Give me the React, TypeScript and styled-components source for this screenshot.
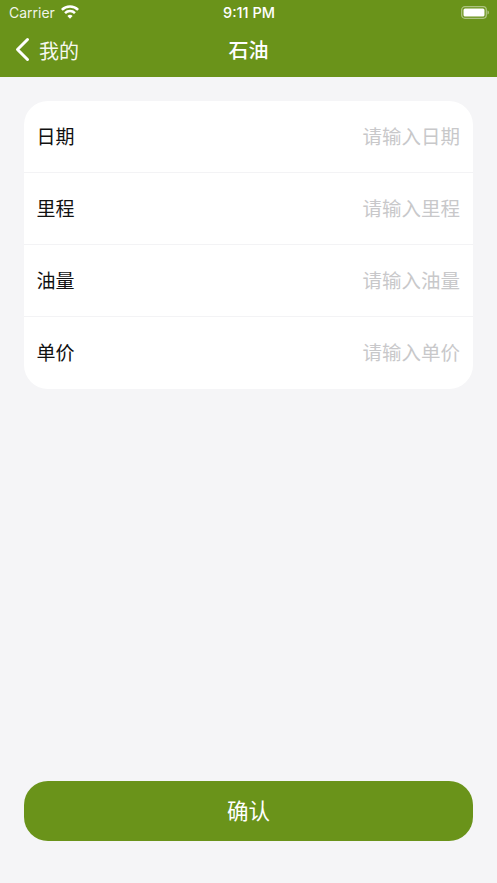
import React from 'react';
import styled, { createGlobalStyle } from 'styled-components';

const cjk = '"Noto Sans CJK SC", "Noto Sans", sans-serif';
const green = '#6a931a';

const GlobalStyle = createGlobalStyle`
  html, body {
    margin: 0;
    padding: 0;
    height: 100%;
    background: #f5f5f7;
  }
  #root {
    height: 100%;
  }
`;

const Page = styled.div`
  display: flex;
  flex-direction: column;
  height: 883px;
  background: #f5f5f7;
  font-family: ${cjk};
`;

const Header = styled.header`
  height: 77px;
  flex-shrink: 0;
  display: flex;
  flex-direction: column;
  background: ${green};
  color: #fff;
`;

const StatusBar = styled.div`
  height: 24px;
  display: grid;
  grid-template-columns: 1fr auto 1fr;
  align-items: center;
  padding: 0 8px 0 9px;
`;

const StatusLeft = styled.div`
  display: flex;
  align-items: center;
  gap: 6px;
  font-family: Inter, "Liberation Sans", sans-serif;
  font-size: 14px;
  color: rgba(255, 255, 255, 0.92);
`;

const Clock = styled.div`
  font-family: Inter, "Liberation Sans", sans-serif;
  font-size: 14.5px;
  font-weight: 500;
`;

const StatusRight = styled.div`
  display: flex;
  justify-content: flex-end;
`;

const NavBar = styled.nav`
  flex: 1;
  position: relative;
  display: flex;
  align-items: center;
  justify-content: center;
  padding-bottom: 2px;
`;

const BackButton = styled.div`
  position: absolute;
  left: 15px;
  top: 50%;
  transform: translateY(-50%);
  margin-top: -1px;
  display: flex;
  align-items: center;
  gap: 9px;
  font-size: 20px;
  color: rgba(255, 255, 255, 0.95);
`;

const Title = styled.h1`
  margin: 0;
  font-size: 20px;
  font-weight: 500;
`;

const Main = styled.main`
  flex: 1;
  display: flex;
  flex-direction: column;
  justify-content: space-between;
  padding: 24px 24px 42px;
`;

const Card = styled.section`
  background: #fff;
  border-radius: 24px;
  overflow: hidden;
`;

const Row = styled.div`
  height: 72px;
  box-sizing: border-box;
  display: flex;
  align-items: center;
  justify-content: space-between;
  padding: 0 13px 3px 13px;
  border-bottom: 1px solid #f3f3f5;
  &:last-child {
    border-bottom-color: transparent;
  }
`;

const Label = styled.span`
  font-size: 19px;
  margin-left: -0.5px;
  color: #111;
`;

const Placeholder = styled.span`
  font-size: 19.5px;
  color: #c8c8ca;
`;

const ConfirmButton = styled.button`
  height: 60px;
  border: none;
  border-radius: 24px;
  padding: 0 0 4px;
  background: ${green};
  color: #fff;
  font-family: ${cjk};
  font-size: 21.5px;
`;

const WifiIcon = () => (
  <svg width="18" height="14" viewBox="0 0 18 14" fill="none">
    <path d="M.87 4.87a11.5 11.5 0 0 1 16.26 0" stroke="#fff" strokeWidth="2.5" />
    <path d="M4.05 8.05a7 7 0 0 1 9.9 0" stroke="#fff" strokeWidth="2.5" />
    <path d="M9 13.8 6.4 11a3.700 3.700 0 0 1 5.200 0z" fill="#fff" />
  </svg>
);

const BatteryIcon = () => (
  <svg width="28" height="13" viewBox="0 0 28 13" fill="none">
    <rect x="0.7" y="0.7" width="24.600" height="11.600" rx="3.200" stroke="#fff" strokeOpacity="0.45" strokeWidth="1.300" />
    <rect x="2.500" y="2.500" width="21" height="8" rx="1.500" fill="#fff" />
    <path d="M26.500 4.500c.9.3 1.400 1.100 1.400 2s-.5 1.700-1.400 2z" fill="#fff" fillOpacity="0.5" />
  </svg>
);

const BackIcon = () => (
  <svg width="15" height="24" viewBox="0 0 15 24" fill="none">
    <path d="M12.500 2 2.500 12l10 10" stroke="#fff" strokeWidth="3" strokeLinecap="round" strokeLinejoin="round" />
  </svg>
);

const fields = [
  { label: '日期', placeholder: '请输入日期' },
  { label: '里程', placeholder: '请输入里程' },
  { label: '油量', placeholder: '请输入油量' },
  { label: '单价', placeholder: '请输入单价' },
];

const App: React.FC = () => (
  <Page>
    <GlobalStyle />
    <Header>
      <StatusBar>
        <StatusLeft>
          Carrier
          <WifiIcon />
        </StatusLeft>
        <Clock>9:11 PM</Clock>
        <StatusRight>
          <BatteryIcon />
        </StatusRight>
      </StatusBar>
      <NavBar>
        <BackButton>
          <BackIcon />
          我的
        </BackButton>
        <Title>石油</Title>
      </NavBar>
    </Header>
    <Main>
      <Card>
        {fields.map((field) => (
          <Row key={field.label}>
            <Label>{field.label}</Label>
            <Placeholder>{field.placeholder}</Placeholder>
          </Row>
        ))}
      </Card>
      <ConfirmButton>确认</ConfirmButton>
    </Main>
  </Page>
);

export default App;
